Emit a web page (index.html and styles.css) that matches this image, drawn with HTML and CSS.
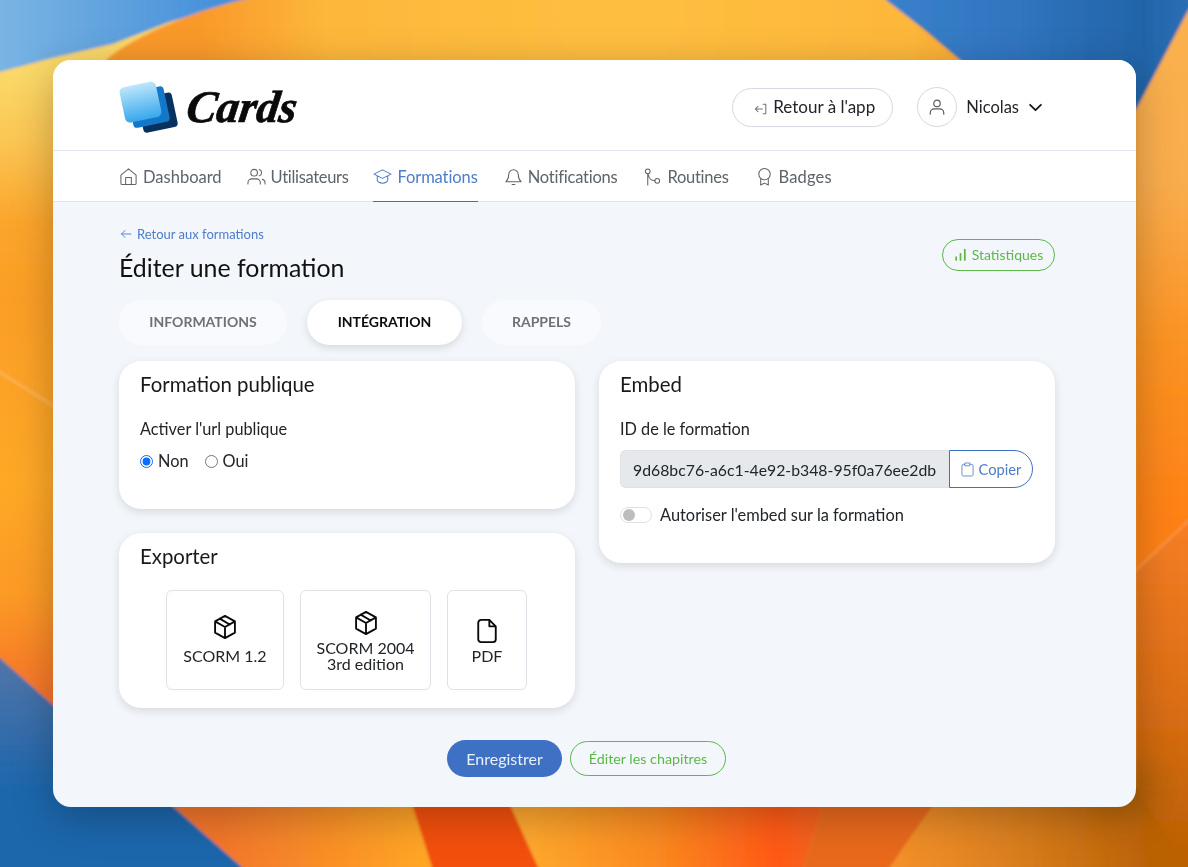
FILE: index.html
```html
<!DOCTYPE html>
<html lang="fr">
<head>
<meta charset="utf-8">
<title>Cards</title>
<link rel="stylesheet" href="styles.css">
</head>
<body>
<svg class="wallpaper" viewBox="0 0 1188 867" preserveAspectRatio="none" aria-hidden="true">
  <defs>
    <filter id="soft" filterUnits="userSpaceOnUse" x="-100" y="-100" width="1388" height="1067"><feGaussianBlur stdDeviation="1.600"/></filter>
    <filter id="wide" filterUnits="userSpaceOnUse" x="-100" y="-100" width="1388" height="1067"><feGaussianBlur stdDeviation="18"/></filter>
    <linearGradient id="skyL" gradientUnits="userSpaceOnUse" x1="0" y1="0" x2="260" y2="0"><stop offset="0" stop-color="#7ab4e3"/><stop offset="1" stop-color="#3d8ad8"/></linearGradient>
    <linearGradient id="skyR" gradientUnits="userSpaceOnUse" x1="890" y1="0" x2="1188" y2="0"><stop offset="0" stop-color="#3a80cb"/><stop offset=".45" stop-color="#2f74bf"/><stop offset=".85" stop-color="#2264a8"/><stop offset="1" stop-color="#2c6eb4"/></linearGradient>
    <radialGradient id="sun" gradientUnits="userSpaceOnUse" cx="620" cy="10" r="420"><stop offset="0" stop-color="#febf40"/><stop offset=".7" stop-color="#fdb73a"/><stop offset="1" stop-color="#f9992a"/></radialGradient>
    <linearGradient id="yellow" gradientUnits="userSpaceOnUse" x1="0" y1="75" x2="0" y2="300"><stop offset="0" stop-color="#fbd868"/><stop offset=".3" stop-color="#fbc552"/><stop offset=".65" stop-color="#fba52c"/><stop offset="1" stop-color="#fb9e25"/></linearGradient>
    <linearGradient id="leftLow" gradientUnits="userSpaceOnUse" x1="0" y1="300" x2="0" y2="710"><stop offset="0" stop-color="#fb9e25"/><stop offset=".45" stop-color="#fea825"/><stop offset=".72" stop-color="#fc9a25"/><stop offset="1" stop-color="#f56e2a"/></linearGradient>
    <linearGradient id="blueLow" gradientUnits="userSpaceOnUse" x1="0" y1="665" x2="0" y2="790"><stop offset="0" stop-color="#4f74a8"/><stop offset="1" stop-color="#1d66ac"/></linearGradient>
    <linearGradient id="rightUp" gradientUnits="userSpaceOnUse" x1="0" y1="30" x2="0" y2="520"><stop offset="0" stop-color="#fab04e"/><stop offset=".3" stop-color="#f9ad4e"/><stop offset=".65" stop-color="#fb9222"/><stop offset="1" stop-color="#fe8116"/></linearGradient>
    <linearGradient id="rightLow" gradientUnits="userSpaceOnUse" x1="0" y1="530" x2="0" y2="850"><stop offset="0" stop-color="#f57d24"/><stop offset=".5" stop-color="#dd6f16"/><stop offset="1" stop-color="#bd6103"/></linearGradient>
    <linearGradient id="botA" gradientUnits="userSpaceOnUse" x1="220" y1="0" x2="420" y2="0"><stop offset="0" stop-color="#f2762a"/><stop offset="1" stop-color="#ffa526"/></linearGradient>
    <linearGradient id="botC" gradientUnits="userSpaceOnUse" x1="530" y1="0" x2="810" y2="0"><stop offset="0" stop-color="#fea72d"/><stop offset=".45" stop-color="#fb8a20"/><stop offset=".88" stop-color="#ff5917"/><stop offset="1" stop-color="#f5611c"/></linearGradient>
    <linearGradient id="botE" gradientUnits="userSpaceOnUse" x1="900" y1="0" x2="1150" y2="0"><stop offset="0" stop-color="#f39029"/><stop offset=".45" stop-color="#da7f1f"/><stop offset="1" stop-color="#ba6205"/></linearGradient>
  </defs>
  <rect x="-20" y="-20" width="1228" height="907" fill="#fba126"/>
  <g filter="url(#soft)">
    <polygon points="-50,-50 300,-50 250,0 170,22 113,44 53,58 0,72 -50,84" fill="url(#skyL)"/>
    <polygon points="-50,84 0,72 53,58 113,44 170,22 250,-2 151,33 106,60 106,300 -50,300" fill="url(#yellow)"/>
    <path d="M106 60C125 42 185 12 250 -2L250 -50H870L886 0C925 30 950 55 972 70V400H106Z" fill="url(#sun)"/>
    <polygon points="872,-50 1240,-50 1188,11 1136,110 1000,110 972,70 925,30 886,0" fill="url(#skyR)"/>
    <polygon points="1136,110 1188,11 1240,-40 1240,500 1188,520 1136,572" fill="url(#rightUp)"/>
    <polygon points="1136,572 1188,520 1240,490 1240,900 1136,900" fill="url(#rightLow)"/>
    <polygon points="-50,300 106,300 106,760 53,705 0,658 -50,630" fill="url(#leftLow)"/>
    <polygon points="-50,630 0,658 53,705 174,807 242,867 260,900 -50,900" fill="url(#blueLow)"/>
    <polygon points="150,780 395,780 413,807 432,867 436,900 258,900 242,867 174,807" fill="url(#botA)"/>
    <polygon points="395,780 495,780 511,807 538,867 552,900 436,900 432,867 413,807" fill="#f35010"/>
    <polygon points="495,780 830,780 822,807 803,867 796,900 552,900 538,867 511,807" fill="url(#botC)"/>
    <polygon points="830,780 945,780 932,807 890,867 870,900 796,900 803,867 822,807" fill="#e9691c"/>
    <polygon points="945,780 1130,780 1210,900 870,900 890,867 932,807" fill="url(#botE)"/>
    <line x1="-10" y1="366" x2="60" y2="410" stroke="#fdc47c" stroke-width="2" opacity=".65"/>
    <line x1="1130" y1="576" x2="1195" y2="515" stroke="#fda255" stroke-width="2" opacity=".7"/>
  </g>
  <g filter="url(#wide)">
    <ellipse cx="1130" cy="790" rx="30" ry="22" fill="#8c5208" opacity=".55"/>
  </g>
</svg>

<main class="window">
  <header class="topbar">
    <div class="brand">
      <svg class="logo-mark" viewBox="0 0 60 53" aria-hidden="true">
        <defs>
          <linearGradient id="card1" x1="0" y1="0" x2="0" y2="1"><stop offset="0" stop-color="#bde6fb"/><stop offset="1" stop-color="#37a8ec"/></linearGradient>
        </defs>
        <rect x="21" y="14" width="35" height="35" rx="4" transform="rotate(-12 39 31)" fill="#07325f"/>
        <rect x="11" y="8" width="37" height="36" rx="4" transform="rotate(-12 30 26)" fill="#1378c9"/>
        <rect x="3" y="3" width="37" height="36" rx="5" transform="rotate(-12 22 21)" fill="url(#card1)"/>
      </svg>
      <span class="logo-word">Cards</span>
    </div>
    <div class="top-actions">
      <a class="back-app">
        <svg class="ic-back" viewBox="0 0 16 16" aria-hidden="true"><path d="M10.500 2.500h3v11h-3M9.500 8H1.500M4.500 5L1.500 8l3 3"/></svg>
        <span>Retour à l'app</span>
      </a>
      <div class="user">
        <span class="avatar">
          <svg viewBox="0 0 20 20" aria-hidden="true"><circle cx="10" cy="6" r="3.600"/><path d="M2.500 18v-1.500c0-2.600 2-4.500 4.500-4.500h6c2.500 0 4.500 1.900 4.500 4.500V18"/></svg>
        </span>
        <span class="user-name">Nicolas</span>
        <svg class="chev" viewBox="0 0 16 10" aria-hidden="true"><path d="M2 2l6 6 6-6"/></svg>
      </div>
    </div>
  </header>

  <nav class="nav">
    <a class="nav-item">
      <svg viewBox="0 0 20 20" aria-hidden="true"><path d="M2 8.500L10 2l8 6.500V17a1.500 1.500 0 0 1-1.500 1.500h-13A1.500 1.500 0 0 1 2 17ZM7 18.500V11h6v7.500"/></svg>
      <span>Dashboard</span>
    </a>
    <a class="nav-item">
      <svg viewBox="0 0 20 20" aria-hidden="true"><circle cx="7.500" cy="6" r="3.500"/><path d="M1 18v-1.500C1 14 3 12.500 5 12.500h5c2 0 4 1.500 4 4V18M13 2.700a3.500 3.500 0 0 1 0 6.600M16 12.800c1.800.5 3 2 3 3.700V18"/></svg>
      <span>Utilisateurs</span>
    </a>
    <a class="nav-item active">
      <svg viewBox="0 0 20 20" aria-hidden="true"><path d="M10 3L1 7.500l9 4.500 9-4.500ZM4.500 9.500V14c0 1.500 2.500 3 5.500 3s5.500-1.500 5.500-3V9.500"/></svg>
      <span>Formations</span>
    </a>
    <a class="nav-item">
      <svg viewBox="0 0 20 20" aria-hidden="true"><path d="M5 8a5 5 0 0 1 10 0c0 5 2.500 7 3 7.500H2C2.500 15 5 13 5 8ZM8.500 18.500h3"/></svg>
      <span>Notifications</span>
    </a>
    <a class="nav-item">
      <svg viewBox="0 0 20 20" aria-hidden="true"><circle cx="5" cy="4.500" r="2.500"/><circle cx="15" cy="14.500" r="2.500"/><path d="M5 7v12M5.500 8c.5 4 3.500 6.500 7 6.500"/></svg>
      <span>Routines</span>
    </a>
    <a class="nav-item">
      <svg viewBox="0 0 20 20" aria-hidden="true"><circle cx="10" cy="7.500" r="6"/><path d="M6 12.500V19l4-2 4 2v-6.500"/></svg>
      <span>Badges</span>
    </a>
  </nav>

  <section class="content">
    <div class="page-head">
      <div>
        <a class="crumb">
          <svg viewBox="0 0 12 12" aria-hidden="true"><path d="M11 6H1.500M5 2.500L1.500 6 5 9.500"/></svg>
          <span>Retour aux formations</span>
        </a>
        <h1>Éditer une formation</h1>
      </div>
      <a class="stats">
        <svg viewBox="0 0 12 12" aria-hidden="true"><path d="M2 11V8.500M6 11V5.500M10 11V1.500"/></svg>
        <span>Statistiques</span>
      </a>
    </div>

    <div class="tabs">
      <a class="tab">INFORMATIONS</a>
      <a class="tab current">INTÉGRATION</a>
      <a class="tab">RAPPELS</a>
    </div>

    <div class="columns">
      <div class="col">
        <article class="card card-public">
          <h2>Formation publique</h2>
          <p class="label">Activer l'url publique</p>
          <div class="radios">
            <label class="radio"><input type="radio" name="pub" checked><span>Non</span></label>
            <label class="radio"><input type="radio" name="pub"><span>Oui</span></label>
          </div>
        </article>
        <article class="card card-export">
          <h2>Exporter</h2>
          <div class="exports">
            <a class="export e1">
              <svg viewBox="0 0 24 24" aria-hidden="true"><path d="M12 2.500l8.500 4.700v9.600L12 21.500l-8.500-4.700V7.200ZM3.500 7.200L12 12l8.500-4.800M12 12v9.500M7.500 4.800L16 9.800"/></svg>
              <span>SCORM 1.2</span>
            </a>
            <a class="export e2">
              <svg viewBox="0 0 24 24" aria-hidden="true"><path d="M12 2.500l8.500 4.700v9.600L12 21.500l-8.500-4.700V7.200ZM3.500 7.200L12 12l8.500-4.800M12 12v9.500M7.500 4.800L16 9.800"/></svg>
              <span>SCORM 2004<br>3rd edition</span>
            </a>
            <a class="export e3">
              <svg viewBox="0 0 24 24" aria-hidden="true"><path d="M14 2.500H7A2.500 2.500 0 0 0 4.500 5v14A2.500 2.500 0 0 0 7 21.500h10a2.500 2.500 0 0 0 2.500-2.500V8ZM14 2.500V8h5.500"/></svg>
              <span>PDF</span>
            </a>
          </div>
        </article>
      </div>
      <div class="col">
        <article class="card card-embed">
          <h2>Embed</h2>
          <p class="label">ID de le formation</p>
          <div class="copy-group">
            <span class="copy-id">9d68bc76-a6c1-4e92-b348-95f0a76ee2db</span>
            <a class="copy-btn">
              <svg viewBox="0 0 14 16" aria-hidden="true"><path d="M4 2.500H2.500A1.500 1.500 0 0 0 1 4v9.500A1.500 1.500 0 0 0 2.500 15h9a1.500 1.500 0 0 0 1.500-1.500V4a1.500 1.500 0 0 0-1.500-1.500H10M4.500 1h5v3h-5Z"/></svg>
              <span>Copier</span>
            </a>
          </div>
          <label class="switch-row">
            <span class="switch"><i></i></span>
            <span>Autoriser l'embed sur la formation</span>
          </label>
        </article>
      </div>
    </div>

    <div class="footer-actions">
      <a class="btn-save">Enregistrer</a>
      <a class="btn-chapters">Éditer les chapitres</a>
    </div>
  </section>
</main>
</body>
</html>
```
FILE: styles.css
```css
* { box-sizing: border-box; }
html, body { height: 100%; }
body {
  margin: 0;
  padding: 60px 52px 60px 53px;
  overflow: hidden;
  font-family: "Lato", "Open Sans", sans-serif;
  color: #212529;
}
a { text-decoration: none; color: inherit; }
svg { display: block; fill: none; stroke: currentColor; stroke-linecap: round; stroke-linejoin: round; }

.wallpaper { position: fixed; inset: 0; width: 100%; height: 100%; stroke: none; z-index: -1; }

.window {
  width: 1083px;
  height: 747px;
  border-radius: 18px;
  overflow: hidden;
  background: #f3f6fb;
  box-shadow: 0 10px 40px rgba(0, 0, 0, .25);
  display: flex;
  flex-direction: column;
}

.topbar {
  height: 91px;
  flex: none;
  background: #fff;
  border-bottom: 1px solid #e3e6ef;
  padding: 4px 93px 0 66px;
  display: flex;
  align-items: center;
  justify-content: space-between;
}
.brand { display: flex; align-items: center; gap: 8px; }
.logo-mark { width: 60px; height: 53px; stroke: none; }
.logo-word {
  display: inline-block;
  font-family: "Liberation Serif", serif;
  font-style: italic;
  font-weight: 700;
  font-size: 45px;
  line-height: 1;
  color: #0a0a0a;
  -webkit-text-stroke: .7px #0a0a0a;
  transform: skewX(-8deg);
}
.top-actions { display: flex; align-items: center; gap: 24px; }
.back-app {
  width: 161px;
  height: 39px;
  padding: 0 0 2px 4px;
  border: 1px solid #d5d8de;
  border-radius: 20px;
  display: flex;
  align-items: center;
  justify-content: center;
  gap: 5px;
  font-size: 17px;
  color: #212529;
}
.ic-back { width: 14px; height: 14px; stroke: #6c757d; stroke-width: 1.200; margin-top: 5px; }
.user { display: flex; align-items: center; }
.avatar {
  width: 40px;
  height: 40px;
  border: 1px solid #d5d8de;
  border-radius: 50%;
  display: flex;
  align-items: center;
  justify-content: center;
  color: #555b61;
}
.avatar svg { width: 18px; height: 18px; stroke-width: 1.300; }
.user-name { margin-left: 9px; font-size: 16.500px; }
.chev { width: 15px; height: 9px; margin-left: 9px; stroke: #16191c; stroke-width: 2; }

.nav {
  height: 51px;
  flex: none;
  background: #fff;
  border-bottom: 1px solid #e0e3ea;
  padding: 0 66px;
  display: flex;
  gap: 26px;
  color: #5d646b;
  font-size: 16.500px;
}
.nav-item { display: flex; align-items: center; gap: 5px; position: relative; padding-top: 1px; }
.nav-item svg { width: 19px; height: 19px; stroke-width: 1.100; }
.nav-item:nth-child(1) { margin-right: -1px; }
.nav-item:nth-child(2) { margin-right: -1px; letter-spacing: -.33px; }
.nav-item:nth-child(3) { letter-spacing: -.1px; }
.nav-item:nth-child(4) { letter-spacing: -.23px; }
.nav-item:nth-child(5) { letter-spacing: -.28px; }
.nav-item:nth-child(6) { letter-spacing: .17px; }
.nav-item.active { color: #4d7dc9; }
.nav-item.active::after {
  content: "";
  position: absolute;
  left: 0; right: 0; bottom: -1px;
  height: 1px;
  background: #3e71c3;
}

.content { flex: 1; padding: 25px 81px 0 66px; display: flex; flex-direction: column; }
.page-head { display: flex; justify-content: space-between; height: 54px; }
.crumb { display: flex; align-items: center; gap: 5px; padding-left: 1px; color: #4d7dc9; font-size: 13px; line-height: 15px; }
.crumb svg { width: 12px; height: 12px; stroke-width: .9; margin-top: -2px; }
h1 { margin: 10px 0 0; font-size: 24.900px; line-height: 30px; font-weight: 400; color: #111; }
.stats {
  margin-top: 12px;
  height: 32px;
  width: 113px;
  padding-bottom: 2px;
  border: 1px solid #5cb946;
  border-radius: 16px;
  display: flex;
  align-items: center;
  justify-content: center;
  gap: 5px;
  color: #5cb946;
  font-size: 14px;
}
.stats svg { width: 13px; height: 13px; stroke-width: 1.600; }

.tabs { margin-top: 19px; display: flex; gap: 20px; }
.tab {
  height: 45px;
  padding: 0 0 2px;
  border-radius: 23px;
  background: #f9fafd;
  display: flex;
  align-items: center;
  justify-content: center;
  font-size: 14px;
  font-weight: 700;
  color: #6c7278;
}
.tab:nth-child(1) { width: 168px; }
.tab:nth-child(2) { width: 155px; }
.tab:nth-child(3) { width: 119px; }
.tab.current { background: #fff; color: #0c0c0c; box-shadow: 0 3px 8px rgba(0, 0, 0, .12); }

.columns { margin-top: 16px; display: grid; grid-template-columns: 456px 456px; gap: 24px; }
.col { display: flex; flex-direction: column; gap: 24px; }
.card {
  background: #fff;
  border-radius: 22px;
  box-shadow: 0 3px 10px rgba(0, 0, 0, .12);
  padding: 10px 22px 0 21px;
}
h2 { margin: 0; font-size: 20.400px; line-height: 26px; font-weight: 400; color: #17191b; }
.label { margin: 21px 0 0; font-size: 16.300px; line-height: 22px; color: #212529; }
.card-public { height: 148px; }
.card-export { height: 175px; }
.card-embed { height: 202px; }
.radios { margin-top: 10px; display: flex; gap: 16px; font-size: 16.300px; line-height: 22px; }
.radio { display: flex; align-items: center; gap: 5px; }
.radio input { margin: 0; width: 13px; height: 13px; accent-color: #0d6efd; }

.exports { margin-top: 21px; display: flex; justify-content: center; gap: 16px; }
.export {
  height: 100px;
  border: 1px solid #dee2e6;
  border-radius: 6px;
  display: flex;
  flex-direction: column;
  align-items: center;
  justify-content: center;
  text-align: center;
  font-size: 16px;
  line-height: 16px;
  color: #212529;
  gap: 3px;
}
.export svg { width: 28px; height: 28px; stroke: #0a0a0a; stroke-width: 1.600; flex: none; }
.e1 svg { transform: translateY(-4px); }
.e1 { width: 118px; }
.e2 { width: 131px; }
.e3 { width: 80px; }

.copy-group { margin-top: 10px; display: flex; height: 38px; width: 413px; }
.copy-id {
  flex: 1;
  background: #e6e9ec;
  border: 1px solid #dee2e6;
  border-right: 0;
  border-radius: 6px 0 0 6px;
  display: flex;
  align-items: center;
  padding-left: 12px;
  font-size: 15.800px;
  white-space: nowrap;
}
.copy-btn {
  width: 84px;
  flex: none;
  border: 1px solid #3e71c3;
  border-radius: 0 19px 19px 0;
  display: flex;
  align-items: center;
  justify-content: center;
  gap: 5px;
  color: #4d7dc9;
  font-size: 14.700px;
}
.copy-btn svg { width: 13px; height: 15px; stroke-width: .9; }
.switch-row { margin-top: 16px; display: flex; align-items: center; gap: 8px; font-size: 16.400px; line-height: 22px; }
.switch {
  width: 32px;
  height: 16px;
  border: 1px solid #dee2e6;
  border-radius: 8px;
  background: #fff;
  display: flex;
  align-items: center;
  padding-left: 2px;
}
.switch i { width: 12px; height: 12px; border-radius: 50%; background: #bdbdbd; }

.footer-actions { margin-top: 32px; display: flex; justify-content: center; gap: 8px; align-items: center; padding-right: 1px; }
.btn-save {
  width: 115px;
  height: 37px;
  border-radius: 19px;
  background: #3e71c3;
  color: #eaf0fa;
  display: flex;
  align-items: center;
  justify-content: center;
  font-size: 16px;
}
.btn-chapters {
  width: 156px;
  height: 35px;
  border: 1px solid #5cb946;
  border-radius: 18px;
  color: #5cb946;
  display: flex;
  align-items: center;
  justify-content: center;
  font-size: 14.300px;
}
```
